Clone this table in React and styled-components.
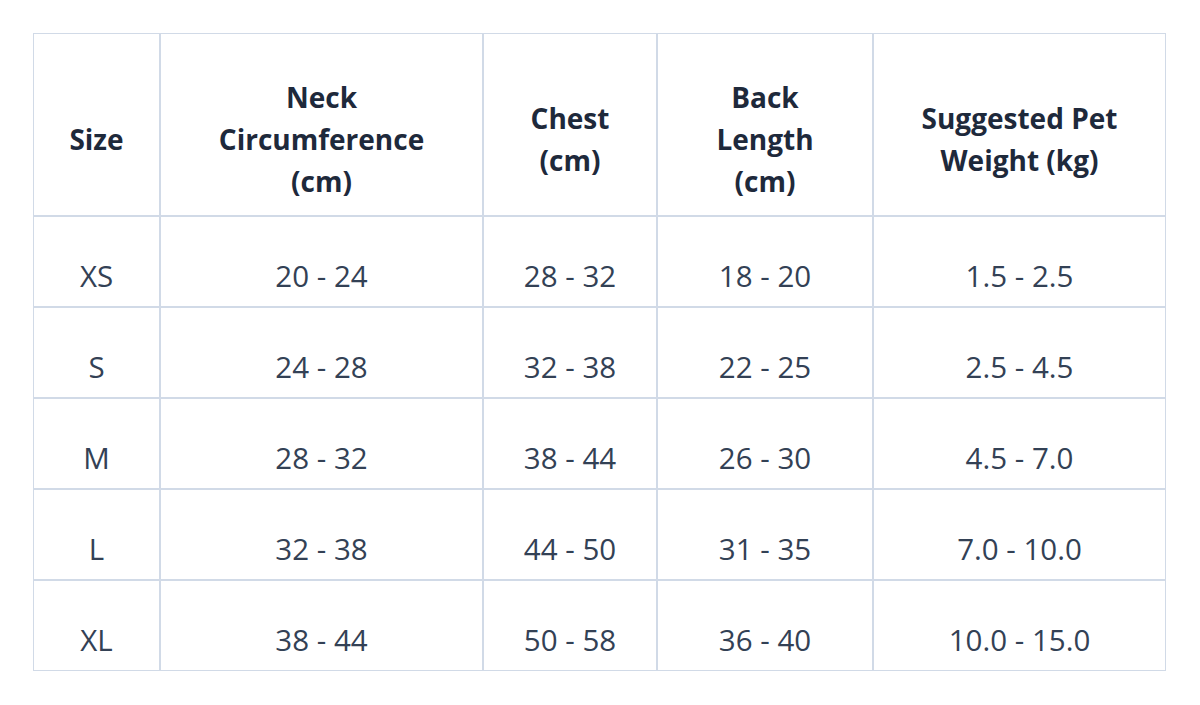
import React from "react";
import styled, { createGlobalStyle } from "styled-components";

const Global = createGlobalStyle`
  html, body { margin: 0; padding: 0; background: #ffffff; }
  body { font-family: "Open Sans", "Noto Sans", sans-serif; }
`;

const Page = styled.div`
  padding: 33px 34px 33px 33px;
`;

const Table = styled.table`
  width: 100%;
  border-collapse: separate;
  border-spacing: 0;
  table-layout: fixed;
`;

const HeadCell = styled.th`
  padding: 42px 12px 13px;
  border: 1px solid #d1dae7;
  color: #1e293b;
  font-size: 28px;
  font-weight: 700;
  line-height: 42px;
  text-align: center;
  vertical-align: middle;
`;

const Cell = styled.td`
  padding: 38px 12px 9px;
  border: 1px solid #d1dae7;
  color: #334155;
  font-size: 29.5px;
  font-weight: 400;
  line-height: 42px;
  text-align: center;
  vertical-align: middle;
`;

const widths = [127, 323, 174, 216, 293];

const headers = [
  "Size",
  <>Neck<br />Circumference<br />(cm)</>,
  <>Chest<br />(cm)</>,
  <>Back<br />Length<br />(cm)</>,
  <>Suggested Pet<br />Weight (kg)</>,
];

const rows = [
  ["XS", "20 - 24", "28 - 32", "18 - 20", "1.5 - 2.5"],
  ["S", "24 - 28", "32 - 38", "22 - 25", "2.5 - 4.5"],
  ["M", "28 - 32", "38 - 44", "26 - 30", "4.5 - 7.0"],
  ["L", "32 - 38", "44 - 50", "31 - 35", "7.0 - 10.0"],
  ["XL", "38 - 44", "50 - 58", "36 - 40", "10.0 - 15.0"],
];

export default function App() {
  return (
    <Page>
      <Global />
      <Table>
        <colgroup>
          {widths.map((w, i) => (
            <col key={i} style={{ width: w }} />
          ))}
        </colgroup>
        <thead>
          <tr>
            {headers.map((h, i) => (
              <HeadCell key={i}>{h}</HeadCell>
            ))}
          </tr>
        </thead>
        <tbody>
          {rows.map((r, i) => (
            <tr key={i}>
              {r.map((c, j) => (
                <Cell key={j}>{c}</Cell>
              ))}
            </tr>
          ))}
        </tbody>
      </Table>
    </Page>
  );
}
